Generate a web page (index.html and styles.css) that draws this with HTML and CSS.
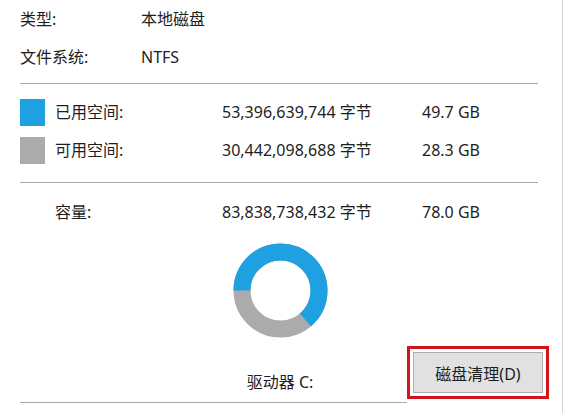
FILE: index.html
```html
<!DOCTYPE html>
<html lang="zh-CN">
<head>
<meta charset="utf-8">
<title>本地磁盘 (C:) 属性</title>
<link rel="stylesheet" href="styles.css">
</head>
<body>
<div class="panel">
  <div class="info-row"><span class="key">类型:</span><span>本地磁盘</span></div>
  <div class="info-row"><span class="key">文件系统:</span><span>NTFS</span></div>
  <div class="sep sep-1"></div>
  <div class="space-list">
    <div class="space-row">
      <span class="swatch used"></span>
      <span class="label">已用空间:</span>
      <span class="bytes">53,396,639,744 字节</span>
      <span class="gb">49.7 GB</span>
    </div>
    <div class="space-row">
      <span class="swatch free"></span>
      <span class="label">可用空间:</span>
      <span class="bytes">30,442,098,688 字节</span>
      <span class="gb">28.3 GB</span>
    </div>
  </div>
  <div class="sep sep-2"></div>
  <div class="space-row capacity">
    <span class="swatch none"></span>
    <span class="label">容量:</span>
    <span class="bytes">83,838,738,432 字节</span>
    <span class="gb">78.0 GB</span>
  </div>
  <div class="drive">
    <div class="chart">
      <svg class="donut" width="95" height="95" viewBox="0 0 95 95">
        <circle cx="47.5" cy="47.5" r="38.5" fill="none" stroke="#ababab" stroke-width="17"/>
        <circle cx="47.5" cy="47.5" r="38.5" fill="none" stroke="#1ea0e1" stroke-width="17" stroke-dasharray="154.1 241.9" transform="rotate(180 47.5 47.5)"/>
      </svg>
      <div class="drive-label">驱动器 C:</div>
    </div>
    <button class="cleanup" type="button">磁盘清理(D)</button>
  </div>
  <div class="sep sep-bottom"></div>
</div>
</body>
</html>
```

FILE: styles.css
```css
html, body {
  margin: 0;
  padding: 0;
  background: #ffffff;
}

body {
  font-family: "Noto Sans", "Noto Sans CJK SC", sans-serif;
  font-size: 16px;
  color: #1e1e1e;
}

.panel {
  width: 563px;
  height: 413px;
  box-sizing: border-box;
  border-right: 1px solid #d2d2d2;
  padding-left: 20px;
  overflow: hidden;
}

.info-row {
  display: grid;
  grid-template-columns: 121px auto;
  height: 38px;
  line-height: 38px;
}

.sep {
  height: 1px;
  width: 518px;
  background: #a9a9a9;
}

.sep-1 {
  margin-top: 7px;
}

.space-list {
  margin-top: 9px;
}

.space-row {
  display: grid;
  grid-template-columns: 35px 167px 200px auto;
  align-items: center;
  height: 38px;
  line-height: 20px;
}

.bytes .unit {
  margin-left: 2px;
}

.swatch {
  width: 25px;
  height: 27px;
}

.swatch.used {
  background: #1ea0e1;
}

.swatch.free {
  background: #ababab;
}

.sep-2 {
  margin-top: 13px;
}

.capacity {
  margin-top: 10px;
}

.drive {
  display: flex;
  align-items: flex-end;
  margin-top: 12px;
}

.chart {
  width: 140px;
  margin-left: 190px;
  display: flex;
  flex-direction: column;
  align-items: center;
}

.donut {
  display: block;
}

.drive-label {
  line-height: 20px;
  margin-top: 34px;
  margin-bottom: 1px;
}

.cleanup {
  margin-left: 63px;
  width: 130px;
  height: 41px;
  padding: 0;
  background: #e1e1e1;
  border: 1px solid #adadad;
  border-radius: 0;
  font-family: "Noto Sans", "Noto Sans CJK SC", sans-serif;
  font-size: 16px;
  color: #1e1e1e;
  outline: 3px solid #d2141c;
  outline-offset: 3px;
}

.sep-bottom {
  margin-top: 9px;
  width: 387px;
}
```
